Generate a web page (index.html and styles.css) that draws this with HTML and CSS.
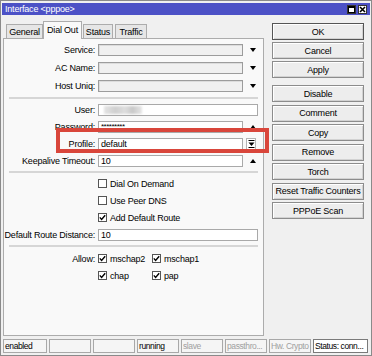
FILE: index.html
```html
<!doctype html>
<html lang="en">

<head>
    <title>Interface &lt;pppoe&gt;</title>
    <link rel="stylesheet" href="styles.css">
</head>

<body>
    <div class="window">
        <div class="titlebar">
            <span class="title">Interface &lt;pppoe&gt;</span>
            <span class="tb-btns">
                <span class="tb-btn">
                    <svg width="7" height="7" viewBox="0 0 7 7"><rect x="0.5" y="0.5" width="6" height="6" fill="none" stroke="#000"/><line x1="0" y1="1.5" x2="7" y2="1.5" stroke="#000"/></svg>
                </span>
                <span class="tb-btn">
                    <svg width="7" height="7" viewBox="0 0 7 7"><path d="M1 1L6 6M6 1L1 6" stroke="#000" stroke-width="1.6"/></svg>
                </span>
            </span>
        </div>

        <div class="main">
            <div class="left">
                <div class="tabs">
                    <span class="tab t-general">General</span>
                    <span class="tab t-dial active">Dial Out</span>
                    <span class="tab t-status">Status</span>
                    <span class="tab t-traffic">Traffic</span>
                </div>

                <div class="panel">
                    <div class="group tall">
                        <div class="row"><label>Service:</label><span class="field short disabled"></span><span class="arrow"><i class="tri-down"></i></span></div>
                        <div class="row"><label>AC Name:</label><span class="field short disabled"></span><span class="arrow"><i class="tri-down"></i></span></div>
                        <div class="row"><label>Host Uniq:</label><span class="field short disabled"></span><span class="arrow"><i class="tri-down"></i></span></div>
                    </div>
                    <div class="sep"></div>

                    <div class="group">
                        <div class="row"><label>User:</label><span class="field"><span class="blurred"></span></span></div>
                        <div class="row"><label>Password:</label><span class="field short"><span class="stars">*********</span></span><span class="arrow"><i class="tri-up"></i></span></div>
                        <div class="row"><label>Profile:</label><span class="field short">default</span>
                            <span class="dropbtn">
                                <svg width="7" height="8" viewBox="0 0 7 8"><line x1="0.5" y1="0.5" x2="6.5" y2="0.5" stroke="#000"/><path d="M0.5 2.5H6.5L3.5 6Z" fill="#000"/><line x1="0.5" y1="7.5" x2="6.5" y2="7.5" stroke="#000"/></svg>
                            </span>
                        </div>
                        <div class="row"><label>Keepalive Timeout:</label><span class="field short">10</span><span class="arrow"><i class="tri-up"></i></span></div>
                    </div>
                    <div class="sep"></div>

                    <div class="group">
                        <div class="row"><label></label><span class="check"><span class="box"></span>Dial On Demand</span></div>
                        <div class="row"><label></label><span class="check"><span class="box"></span>Use Peer DNS</span></div>
                        <div class="row"><label></label><span class="check"><span class="box checked"><svg width="7" height="7" viewBox="0 0 7 7"><path d="M0.8 3.4L2.6 5.4L6.2 1.2" fill="none" stroke="#000" stroke-width="1.4"/></svg></span>Add Default Route</span></div>
                        <div class="row"><label>Default Route Distance:</label><span class="field">10</span></div>
                    </div>
                    <div class="sep wide"></div>

                    <div class="group">
                        <div class="row"><label>Allow:</label>
                            <span class="check col"><span class="box checked"><svg width="7" height="7" viewBox="0 0 7 7"><path d="M0.8 3.4L2.6 5.4L6.2 1.2" fill="none" stroke="#000" stroke-width="1.4"/></svg></span>mschap2</span>
                            <span class="check"><span class="box checked"><svg width="7" height="7" viewBox="0 0 7 7"><path d="M0.8 3.4L2.6 5.4L6.2 1.2" fill="none" stroke="#000" stroke-width="1.4"/></svg></span>mschap1</span>
                        </div>
                        <div class="row"><label></label>
                            <span class="check col"><span class="box checked"><svg width="7" height="7" viewBox="0 0 7 7"><path d="M0.8 3.4L2.6 5.4L6.2 1.2" fill="none" stroke="#000" stroke-width="1.4"/></svg></span>chap</span>
                            <span class="check"><span class="box checked"><svg width="7" height="7" viewBox="0 0 7 7"><path d="M0.8 3.4L2.6 5.4L6.2 1.2" fill="none" stroke="#000" stroke-width="1.4"/></svg></span>pap</span>
                        </div>
                    </div>
                </div>
            </div>

            <div class="buttons">
                <span class="btn default">OK</span>
                <span class="btn">Cancel</span>
                <span class="btn">Apply</span>
                <span class="btn spaced">Disable</span>
                <span class="btn">Comment</span>
                <span class="btn">Copy</span>
                <span class="btn">Remove</span>
                <span class="btn">Torch</span>
                <span class="btn">Reset Traffic Counters</span>
                <span class="btn">PPPoE Scan</span>
            </div>
        </div>

        <div class="statusbar">
            <span class="cell first">enabled</span>
            <span class="cell"></span>
            <span class="cell"></span>
            <span class="cell">running</span>
            <span class="cell muted">slave</span>
            <span class="cell muted">passthro...</span>
            <span class="cell muted">Hw. Crypto</span>
            <span class="cell status">Status: conn...</span>
        </div>

        <div class="highlight"></div>
    </div>
</body>

</html>
```

FILE: styles.css
```css
* {
    box-sizing: border-box;
}

body {
    margin: 0;
    font: 9px "Liberation Sans", sans-serif;
    letter-spacing: -0.2px;
    color: #000;
    background-color: #f0f0f0;
}

.window {
    position: relative;
    width: 372px;
    height: 356px;
    border: 1px solid #8a8a8a;
    padding: 2px 1px 1px 1px;
    background-color: #f0f0f0;
}

.titlebar {
    display: flex;
    align-items: center;
    justify-content: space-between;
    height: 12px;
    padding: 0 3px 0 3px;
    background-color: #4c51c6;
}

.title {
    color: #fff;
    line-height: 12px;
}

.tb-btns {
    display: flex;
    gap: 2px;
}

.tb-btn {
    display: flex;
    align-items: center;
    justify-content: center;
    width: 9px;
    height: 9px;
    background-color: #fff;
    border: 1px solid #333;
}

.main {
    display: flex;
    padding: 6px 0 0 1px;
}

.left {
    width: 261px;
}

.tabs {
    display: flex;
    align-items: flex-end;
    gap: 1px;
    height: 17px;
    padding-left: 3px;
}

.tab {
    display: flex;
    align-items: center;
    justify-content: center;
    height: 14px;
    border: 1px solid #acacac;
    border-bottom: none;
    background-color: #e6e6e6;
}

.tab.active {
    position: relative;
    height: 18px;
    margin-bottom: -1px;
    background-color: #f9f9f9;
    padding-bottom: 2px;
}

.t-general { width: 37px; }
.t-dial { width: 39px; margin-left: -1px; }
.t-status { width: 30px; }
.t-traffic { width: 32px; margin-left: 1px; }

.panel {
    height: 298px;
    border: 1px solid #acacac;
    background-color: #f9f9f9;
    padding: 2px 5px 0 0;
}

.row {
    display: flex;
    align-items: center;
    height: 17px;
}

.tall .row {
    height: 18px;
}

.row label {
    flex: none;
    width: 91px;
    margin-right: 3px;
    text-align: right;
    white-space: nowrap;
}

.field {
    display: flex;
    align-items: center;
    width: 160px;
    height: 12px;
    padding-left: 2px;
    background-color: #fff;
    border: 1px solid #a9a9a9;
    overflow: hidden;
}

.field.short {
    width: 145px;
}

.field.disabled {
    background-color: #f0f0f0;
    border-color: #9c9c9c;
    box-shadow: inset 1px 1px #dcdcdc;
}

.blurred {
    width: 38px;
    height: 8px;
    margin-left: 3px;
    background: linear-gradient(90deg, #e4e4e4, #cfcfcf 30%, #dedede 55%, #c9c9c9 75%, #e6e6e6);
    filter: blur(1px);
}

.stars {
    font-size: 8px;
    letter-spacing: -0.5px;
    line-height: 8px;
    padding-top: 1px;
}

.arrow {
    display: flex;
    justify-content: flex-end;
    width: 13px;
}

.tri-down {
    border-left: 3.5px solid transparent;
    border-right: 3.5px solid transparent;
    border-top: 4px solid #000;
}

.tri-up {
    border-left: 3px solid transparent;
    border-right: 3px solid transparent;
    border-bottom: 4px solid #000;
}

.dropbtn {
    display: flex;
    align-items: center;
    justify-content: center;
    width: 10px;
    height: 12px;
    margin-left: 3px;
    background-color: #fff;
    border: 1px solid #b4b4b4;
}

.sep {
    height: 2px;
    margin: 2px 0 2px 5px;
    background-color: #d6d6d6;
}

.sep.wide {
    margin: 2px 0 3px 5px;
}

.check {
    display: flex;
    align-items: center;
    gap: 3px;
    margin-left: 0;
}

.check.col {
    width: 54px;
}

.box {
    display: flex;
    align-items: center;
    justify-content: center;
    width: 9px;
    height: 9px;
    background-color: #fff;
    border: 1px solid #555;
}

.buttons {
    display: flex;
    flex-direction: column;
    gap: 2.5px;
    width: 92px;
    margin-left: 8px;
    padding-top: 2px;
}

.btn {
    display: flex;
    align-items: center;
    justify-content: center;
    height: 17px;
    border: 1px solid #8c8c8c;
    background-color: #ededed;
    box-shadow: inset 1px 1px #fff, inset -1px -1px #d2d2d2;
    white-space: nowrap;
}

.btn.default {
    border-color: #555;
}

.buttons .btn:nth-child(2),
.buttons .btn:nth-child(3) {
    margin-top: -0.5px;
}

.btn.spaced {
    margin-top: 4.5px;
}

.statusbar {
    display: flex;
    gap: 2px;
    height: 14px;
    margin: 3px 0 0 1px;
}

.cell {
    display: flex;
    align-items: center;
    width: 42px;
    padding-left: 1px;
    border: 1px solid #a8a8a8;
    background-color: #f5f5f5;
    font-size: 8.5px;
    letter-spacing: -0.4px;
    white-space: nowrap;
    overflow: hidden;
}

.cell.first {
    width: 44px;
}

.cell.muted {
    color: #a0a0a0;
}

.cell.status {
    width: 55px;
    background-color: #fff;
    border-color: #7a7a7a;
}

.highlight {
    position: absolute;
    left: 55px;
    top: 127px;
    width: 213px;
    height: 25px;
    border: 4px solid #d9463b;
}
```
